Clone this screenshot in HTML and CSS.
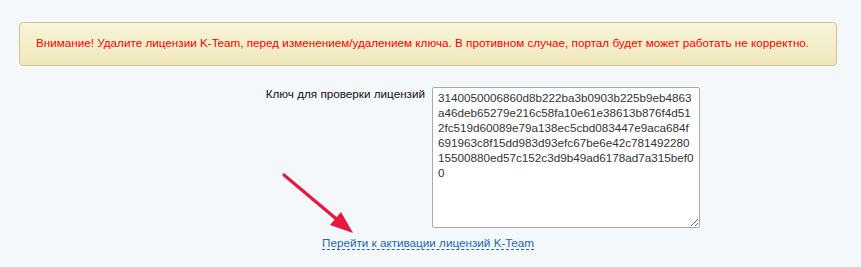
FILE: index.html
```html
<!DOCTYPE html>
<html lang="ru">
<head>
  <meta charset="UTF-8" />
  <title>Лицензии</title>
  <link rel="stylesheet" href="styles.css">
</head>
<body>
  <div class="alert">
    Внимание! Удалите лицензии K-Team, перед изменением/удалением ключа. В противном случае, портал будет может работать не корректно.
  </div>

  <div class="form-row">
    <label class="form-label" for="licKey">Ключ для проверки лицензий</label>
    <textarea id="licKey" class="key-area">3140050006860d8b222ba3b0903b225b9eb4863a46deb65279e216c58fa10e61e38613b876f4d512fc519d60089e79a138ec5cbd083447e9aca684f691963c8f15dd983d93efc67be6e42c78149228015500880ed57c152c3d9b49ad6178ad7a315bef00</textarea>
  </div>

  <div class="link-row">
    <a class="activate-link" href="#">Перейти к активации лицензий K-Team</a>
    <svg class="pointer" width="80" height="70" viewBox="0 0 80 70">
      <line x1="4" y1="4" x2="60" y2="51" stroke="#e8173f" stroke-width="3.2" stroke-linecap="round" />
      <polygon points="73,62 50,54 61,41" fill="#e8173f" />
    </svg>
  </div>
</body>
</html>
```

FILE: styles.css
```css
body {
  margin: 0;
  background-color: #f5f8fa;
  font-family: "Liberation Sans", Arial, sans-serif;
  font-size: 11.7px;
  color: #333;
}

.alert {
  margin: 22px 24px 0 19px;
  padding: 11px 16px 14px;
  line-height: 17px;
  color: #f00;
  background: linear-gradient(to bottom, #f8f4d9, #efe8bb);
  border: 1px solid #d2c88f;
  border-radius: 4px;
}

.form-row {
  display: grid;
  grid-template-columns: 425px 268px;
  column-gap: 7px;
  align-items: start;
  margin-top: 21px;
}

.form-label {
  text-align: right;
  margin-top: -1px;
  line-height: 15px;
  color: #111;
}

.key-area {
  box-sizing: border-box;
  width: 268px;
  height: 141px;
  margin: 0;
  padding: 2px 5px;
  font-family: "Liberation Sans", Arial, sans-serif;
  font-size: 11.7px;
  line-height: 15px;
  color: #333;
  background: #fff;
  border: 1px solid #a9a9a9;
  border-radius: 2px;
  resize: both;
  word-break: break-all;
}

.link-row {
  position: relative;
  padding: 6px 0 0 322px;
  line-height: 17px;
}

.activate-link {
  color: #2366b4;
  text-decoration: none;
  border-bottom: 1px dashed #2366b4;
}

.pointer {
  position: absolute;
  left: 280px;
  top: -57px;
}
```
